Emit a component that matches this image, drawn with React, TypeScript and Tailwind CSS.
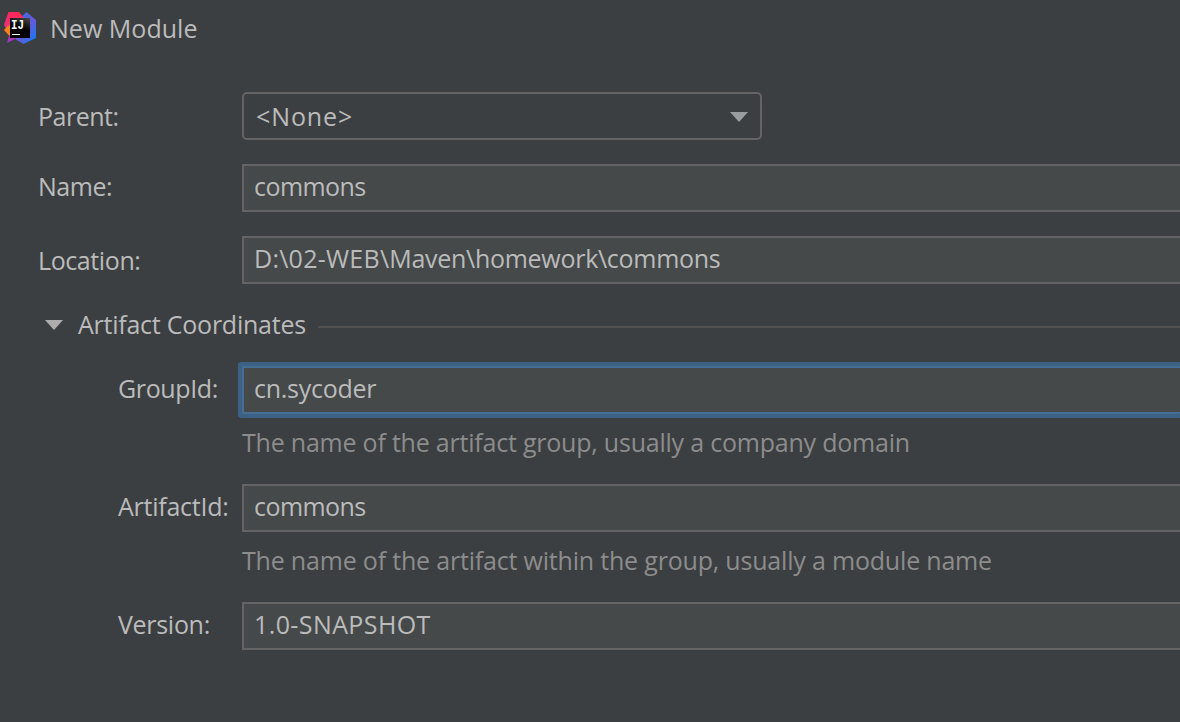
import type { ReactNode } from "react";

function IdeaLogo() {
  return (
    <svg width="32" height="32" viewBox="0 0 32 32" className="shrink-0">
      <defs>
        <linearGradient id="blue" x1="0" y1="0" x2="1" y2="1">
          <stop offset="0" stopColor="#2f6df0" />
          <stop offset="0.4" stopColor="#4f62e0" />
          <stop offset="0.55" stopColor="#6a57d8" />
          <stop offset="0.75" stopColor="#3b6be6" />
          <stop offset="1" stopColor="#087cfa" />
        </linearGradient>
        <linearGradient id="pink" x1="0.5" y1="0" x2="0.3" y2="1">
          <stop offset="0" stopColor="#fe2857" />
          <stop offset="0.5" stopColor="#f02f78" />
          <stop offset="1" stopColor="#9039d0" />
        </linearGradient>
        <linearGradient id="face" x1="1" y1="0" x2="0.6" y2="1">
          <stop offset="0" stopColor="#4a4a4a" />
          <stop offset="0.6" stopColor="#000" />
        </linearGradient>
      </defs>
      <path d="M17 5 22.500 0 32 8V26L19.500 32 9 26Z" fill="url(#blue)" />
      <path d="M4.500 0H15L20 6 13 26 3 31 5.500 22 0 13Z" fill="url(#pink)" />
      <path d="M0 18 4 13.500 8 14V25L4 22.500Z" fill="#fc801d" />
      <rect x="6" y="6" width="20" height="20" fill="url(#face)" />
      <text
        x="7"
        y="17"
        fill="#fff"
        fontSize="13.500"
        fontWeight="700"
        textLength="13"
        lengthAdjust="spacingAndGlyphs"
        fontFamily="Liberation Mono, monospace"
      >
        IJ
      </text>
      <rect x="8" y="22" width="8" height="1" fill="#fff" />
    </svg>
  );
}

function Triangle({ className }: { className: string }) {
  return (
    <svg width="18" height="10" viewBox="0 0 18 10" className={className}>
      <path d="M0 0H18L9 10Z" fill="currentColor" />
    </svg>
  );
}

function Field({ children, focused = false }: { children: ReactNode; focused?: boolean }) {
  return (
    <div
      className={
        focused
          ? "flex h-12 flex-1 items-center rounded-[1px] border-2 border-r-0 border-[#466d94] bg-[#45494a] pb-1 pl-[10px] ring-4 ring-[#3d6185]"
          : "flex h-12 flex-1 items-center border-2 border-r-0 border-[#646464] bg-[#45494a] pb-1 pl-[10px]"
      }
    >
      {children}
    </div>
  );
}

export default function App() {
  return (
    <div className="h-[722px] w-[1180px] overflow-hidden bg-[#3c3f41] font-['Open_Sans',sans-serif] text-[25px] leading-8 whitespace-pre text-[#bbbbbb]">
      <header className="flex h-14 items-center pl-1">
        <IdeaLogo />
        <h1 className="pl-[14px] tracking-[0.03px]">New Module</h1>
      </header>

      <main className="pt-9">
        <div className="flex h-12 items-center pl-[38px]">
          <label className="w-[204px] tracking-[-0.5px]">Parent:</label>
          <div className="flex h-12 w-[520px] items-center justify-between rounded-[5px] border-2 border-[#646464] pr-3 pl-[12px]">
            <span className="tracking-[0.9px]">&lt;None&gt;</span>
            <Triangle className="mt-0.5 text-[#9a9da0]" />
          </div>
        </div>

        <div className="mt-6 flex h-12 items-center pl-[38px]">
          <label className="w-[204px] pb-1 tracking-[-0.45px]">Name:</label>
          <Field><span className="tracking-[-0.55px]">commons</span></Field>
        </div>

        <div className="mt-6 flex h-12 items-center pl-[38px]">
          <label className="w-[204px] tracking-[-0.4px]">Location:</label>
          <Field>
            <span className="tracking-[0.25px]">D:\02-WEB\</span>
            <span className="tracking-[-0.29px]">Maven\homework\commons</span>
          </Field>
        </div>

        <section className="pt-6">
          <div className="flex h-8 items-center pl-[45px]">
            <Triangle className="mt-0.5 shrink-0 text-[#adadad]" />
            <h2 className="w-[255px] pl-[15px] tracking-[-0.24px]">Artifact Coordinates</h2>
            <div className="mt-[6px] h-0.5 flex-1 bg-[#515151]" />
          </div>

          <div className="mt-[26px] flex h-12 items-center pl-[118px]">
            <label className="w-[124px] pb-1 tracking-[-0.38px]">GroupId:</label>
            <Field focused><span className="tracking-[-0.26px]">cn.sycoder</span></Field>
          </div>
          <p className="mt-3 h-8 pl-[242px] tracking-[-0.215px] text-[#8c8c8c]">The name of the artifact group, usually a company domain</p>

          <div className="mt-[26px] flex h-12 items-center pl-[118px]">
            <label className="w-[124px] pb-1 tracking-[-0.25px]">ArtifactId:</label>
            <Field><span className="tracking-[-0.55px]">commons</span></Field>
          </div>
          <p className="mt-3 h-8 pl-[242px] tracking-[-0.19px] text-[#8c8c8c]">The name of the artifact within the group, usually a module name</p>

          <div className="mt-[26px] flex h-12 items-center pl-[118px]">
            <label className="w-[124px] pb-1 tracking-[-0.3px]">Version:</label>
            <Field><span className="tracking-[0.4px]">1.0-SNAPSHOT</span></Field>
          </div>
        </section>
      </main>
    </div>
  );
}
